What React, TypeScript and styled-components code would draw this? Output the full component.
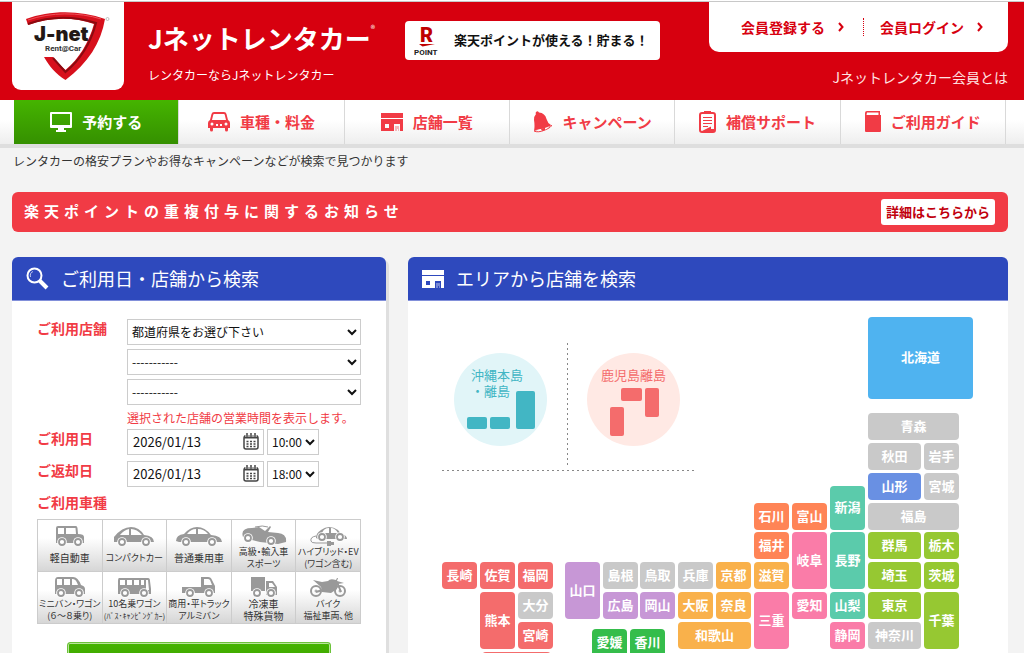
import React from 'react';
import styled, { createGlobalStyle, css } from 'styled-components';

const color = {
  brand: '#d7000f',
  accent: '#f13b45',
  blue: '#2e49bd',
  page: '#f3f3f3',
  line: '#cccccc',
};

const region = {
  none: '#c9c9c9',
  hokkaido: '#4fb3f0',
  tohoku: '#6990e3',
  kanto: '#96c832',
  koshinetsu: '#5bcbab',
  hokuriku: '#ff8456',
  tokai: '#fa7ca8',
  kinki: '#f9b14b',
  chugoku: '#c797d6',
  shikoku: '#35bd4b',
  kyushu: '#f46c6c',
};

const GlobalStyle = createGlobalStyle`
  * { box-sizing: border-box; }
  body {
    margin: 0;
    background: ${color.page};
    color: #333;
    font-family: "Noto Sans CJK JP", sans-serif;
    font-size: 12px;
    line-height: 18px;
  }
  a { color: inherit; text-decoration: none; }
  button, input, select { font: inherit; margin: 0; }
  p, h1, h2 { margin: 0; }
  svg { display: block; flex: none; }
`;

const Page = styled.div`
  height: 100vh;
  overflow: hidden;
  border-top: 1px solid #fff;
`;

/* ---------- header ---------- */

const Header = styled.header`
  display: flex;
  align-items: flex-start;
  height: 99px;
  padding: 0 16px 0 12px;
  border-top: 1px solid #c8c8c8;
  background: ${color.brand};
`;

const LogoBox = styled.a`
  width: 112px;
  height: 88px;
  border-radius: 0 0 9px 9px;
  background: #fff;
`;

const Brand = styled.div`
  width: 257px;
  padding: 17px 0 0 24px;
  color: #fff;
  white-space: nowrap;
`;

const BrandName = styled.h1`
  display: flex;
  height: 38px;
  font-size: 26px;
  line-height: 38px;
  font-weight: 700;
  sup { font-size: 9px; line-height: 20px; font-weight: 400; }
`;

const Tagline = styled.p`
  padding-top: 9px;
`;

const PointBanner = styled.a`
  display: flex;
  align-items: center;
  gap: 14px;
  width: 255px;
  height: 39px;
  margin: 19px 0 0 24px;
  padding: 0 0 2px 9px;
  border-radius: 4px;
  background: #fff;
  color: #111;
  font-size: 13px;
  font-weight: 700;
  white-space: nowrap;
`;

const Member = styled.div`
  display: flex;
  flex-direction: column;
  align-items: flex-end;
  gap: 16px;
  margin-left: auto;
`;

const MemberBox = styled.div`
  display: flex;
  align-items: center;
  width: 299px;
  height: 50px;
  border-radius: 0 0 10px 10px;
  background: #fff;
`;

const MemberLink = styled.a`
  display: flex;
  align-items: center;
  justify-content: space-between;
  width: 119px;
  margin-left: 32px;
  padding-right: 16px;
  color: ${color.brand};
  font-size: 14px;
  font-weight: 700;
  white-space: nowrap;
  & + & {
    width: 120px;
    margin-left: 3px;
    padding: 0 0 0 16px;
    border-left: 1px dotted ${color.brand};
  }
`;

const AboutLink = styled.a`
  color: #ffe3e3;
  font-size: 14px;
  line-height: 18px;
`;

/* ---------- navigation ---------- */

const Nav = styled.nav`
  display: flex;
  height: 48px;
  padding: 0 18px 0 14px;
  border-bottom: 4px solid #dedede;
  background: linear-gradient(#fff 0%, #fff 45%, #eeeeee 100%);
`;

const NavItem = styled.a<{ $active?: boolean }>`
  display: flex;
  flex: 1;
  align-items: center;
  justify-content: center;
  gap: 10px;
  padding-bottom: 1px;
  border-right: 1px solid #d9d9d9;
  color: ${color.accent};
  font-size: 15px;
  font-weight: 700;
  white-space: nowrap;
  ${(p) => p.$active && css`
    background: linear-gradient(#45b400, #359000);
    color: #fff;
  `}
`;

/* ---------- content ---------- */

const Main = styled.main`
  padding: 4px 16px 0 12px;
`;

const Intro = styled.p`
  padding-left: 1px;
`;

const Notice = styled.div`
  display: flex;
  align-items: center;
  justify-content: space-between;
  height: 40px;
  margin: 22px 0 25px;
  padding: 0 13px 0 12px;
  border-radius: 6px;
  background: ${color.accent};
  color: #fff;
`;

const NoticeText = styled.p`
  padding-bottom: 2px;
  font-size: 15px;
  font-weight: 700;
  letter-spacing: 5px;
`;

const NoticeLink = styled.a`
  padding: 4px 5px;
  border-radius: 3px;
  background: #fff;
  color: #c1000d;
  font-size: 13px;
  font-weight: 700;
`;

const Columns = styled.div`
  display: flex;
  align-items: flex-start;
  gap: 22px;
`;

const Panel = styled.section<{ $fixed?: boolean }>`
  flex: ${(p) => (p.$fixed ? '0 0 374px' : '1')};
  border-radius: 6px 6px 0 0;
  background: #fff;
  box-shadow: ${(p) => (p.$fixed ? '3px 3px 0 #dfdfdf' : 'none')};
`;

const PanelTitle = styled.h2`
  display: flex;
  align-items: center;
  gap: 12px;
  height: 44px;
  padding: 0 0 2px 14px;
  border-radius: 6px 6px 0 0;
  border-bottom: 1px solid #8290da;
  background: ${color.blue};
  color: #fff;
  font-size: 18px;
  font-weight: 400;
  svg { position: relative; top: 1px; }
`;

const Form = styled.form`
  padding: 18px 25px 40px;
`;

const Row = styled.div`
  display: grid;
  grid-template-columns: 90px 1fr;
  margin-bottom: 6px;
`;

const labelText = css`
  color: ${color.accent};
  font-size: 14px;
  font-weight: 700;
  line-height: 18px;
`;

const Label = styled.label`
  ${labelText}
`;

const GroupLabel = styled.p`
  ${labelText}
`;

const Fields = styled.div`
  display: flex;
  flex-direction: column;
  gap: 4px;
`;

const Inline = styled.div`
  display: flex;
  gap: 3px;
`;

const Select = styled.select`
  width: 100%;
  height: 26px;
  padding: 0 0 1px;
  border: 1px solid ${color.line};
  border-radius: 0;
  background-color: #fff;
  color: #111;
`;

const TimeSelect = styled(Select)`
  width: 52px;
`;

const Hint = styled.p`
  margin-bottom: -4px;
  color: ${color.accent};
`;

const DateField = styled.div`
  position: relative;
  width: 137px;
`;

const DateInput = styled.input`
  width: 100%;
  height: 26px;
  padding: 0 5px 2px;
  border: 1px solid ${color.line};
  background: #fff;
  color: #111;
  font-size: 13px;
`;

const CalendarButton = styled.button`
  position: absolute;
  top: 4px;
  right: 5px;
  padding: 0;
  border: 0;
  background: none;
`;

const CarGrid = styled.div`
  display: grid;
  grid-template-columns: repeat(5, 1fr);
  margin-top: 8px;
  border-top: 1px solid ${color.line};
  border-left: 1px solid ${color.line};
`;

const CarButton = styled.button`
  display: flex;
  flex-direction: column;
  align-items: center;
  height: 52px;
  padding: 5px 0 0;
  border: 0;
  border-right: 1px solid ${color.line};
  border-bottom: 1px solid ${color.line};
  background: linear-gradient(#fff 0%, #fff 35%, #d6d6d6 100%);
  color: #333;
`;

const CarLabel = styled.span<{ $size: number }>`
  display: flex;
  flex-direction: column;
  justify-content: center;
  height: 24px;
  font-size: ${(p) => p.$size}px;
  font-feature-settings: 'palt';
  line-height: 12px;
  white-space: nowrap;
`;

const SmallLine = styled.span`
  font-size: 8px;
`;

const Submit = styled.button`
  display: block;
  width: 264px;
  height: 48px;
  margin: 18px auto 0 30px;
  border: 1px solid #6cc23a;
  border-radius: 3px;
  background: linear-gradient(#45b400, #359000);
  box-shadow: inset 0 0 0 1px #b9e59b;
`;

/* ---------- area map ---------- */

const MapCanvas = styled.div`
  position: relative;
  height: 480px;
  overflow: hidden;
`;

const Tile = styled.a<{ $x: number; $y: number; $w: number; $h: number; $bg: string }>`
  position: absolute;
  left: ${(p) => p.$x}px;
  top: ${(p) => p.$y}px;
  width: ${(p) => p.$w}px;
  height: ${(p) => p.$h}px;
  display: flex;
  align-items: center;
  justify-content: center;
  padding-bottom: 2px;
  border-radius: 4px;
  background: ${(p) => p.$bg};
  color: #fff;
  font-size: 13px;
  font-weight: 700;
`;

const Islands = styled.a<{ $x: number; $bg: string; $fg: string }>`
  position: absolute;
  left: ${(p) => p.$x}px;
  top: 52px;
  width: 93px;
  height: 93px;
  padding: 14px 0 0 14px;
  border-radius: 50%;
  background: ${(p) => p.$bg};
  color: ${(p) => p.$fg};
  font-size: 13px;
  line-height: 16px;
  white-space: pre;
  svg { position: absolute; left: 0; top: 0; fill: currentColor; }
`;

const Dots = styled.svg`
  position: absolute;
  left: 34px;
  top: 42px;
  stroke: #888;
  stroke-width: 1;
  stroke-dasharray: 2 3;
`;

/* ---------- drawings ---------- */

const Logo = () => (
  <svg width="112" height="88" viewBox="12 2 112 88" role="img" aria-label="J-net Rent@Car">
    <path fill="#d7101c" d="M26 19C50 10 80 10 105 19C101 43 88 63 65.500 80C56 74 49 66 44 57H53C57 62 61 66 65.500 70C79 59 89 42 94 24C74 17 50 17 28 25Z" />
    <path fill="none" stroke="#8c0a10" strokeWidth="2" d="M28 24C50 16 74 16 96 23C91 42 80 60 65.500 72L53 58" />
    <path fill="none" stroke="#f0525a" strokeWidth="1" d="M28 20C51 12 79 12 101 19" />
    <text x="34" y="41" fontFamily="Inter, sans-serif" fontSize="20" fontWeight="900" fill="#231815">J-net</text>
    <text x="45" y="51" fontFamily="Roboto, sans-serif" fontSize="8" fontWeight="700" fill="#333">Rent@Car</text>
    <circle cx="107.500" cy="19" r="1.500" fill="none" stroke="#999" strokeWidth=".6" />
  </svg>
);

const PointMark = () => (
  <svg width="26" height="37" viewBox="0 -4 26 37" role="img" aria-label="R POINT">
    <text x="6" y="17" fontFamily="Roboto, sans-serif" fontSize="20" fontWeight="900" fill="#bf0000">R</text>
    <path fill="#bf0000" d="M5 19H21L8.500 21.500Z" />
    <text x="0" y="30" fontFamily="Roboto, sans-serif" fontSize="8" fontWeight="700" fill="#222">POINT</text>
  </svg>
);

const Chevron = () => (
  <svg width="6" height="10" viewBox="0 0 6 10" fill="none" stroke="currentColor" strokeWidth="2">
    <path d="M1 1L4.500 5L1 9" />
  </svg>
);

const MonitorIcon = () => (
  <svg width="22" height="20" viewBox="0 0 22 20" fill="currentColor">
    <path fillRule="evenodd" d="M1 0H21Q22 0 22 1V15Q22 16 21 16H14V18H16V20H6V18H8V16H1Q0 16 0 15V1Q0 0 1 0ZM2 2V13H20V2Z" />
  </svg>
);

const CarIcon = () => (
  <svg width="22" height="20" viewBox="0 0 22 20" fill="currentColor">
    <path fillRule="evenodd" d="M6 0H16Q18 0 18.500 2L20 8Q22 9 22 11V16H20V18Q20 19.500 18.500 19.500T17 18V16H5V18Q5 19.500 3.500 19.500T2 18V16H0V11Q0 9 2 8L3.500 2Q4 0 6 0ZM6 2Q5.500 2 5.200 3L4 8H18L16.800 3Q16.500 2 16 2ZM4 10.500A1.500 1.500 0 1 0 4 13.500A1.500 1.500 0 1 0 4 10.500ZM18 10.500A1.500 1.500 0 1 0 18 13.500A1.500 1.500 0 1 0 18 10.500ZM8 12V14H10V12ZM12 12V14H14V12Z" />
  </svg>
);

const StoreIcon = () => (
  <svg width="22" height="18" viewBox="0 0 22 18" fill="currentColor">
    <path fillRule="evenodd" d="M0 0H22V5H0ZM0 6H22V18H19V11H13V18H0ZM4 11V15H8V11Z" />
    <path d="M14 13H18V18H17V16H16V18H14Z" opacity=".35" />
  </svg>
);

const BellIcon = () => (
  <svg width="20" height="22" viewBox="0 0 20 22" fill="currentColor">
    <path d="M2.500 2Q4-1 6 1.500Q12 2 13.500 8Q14.500 12 18 14Q17 17 8 18L1 20Q2 15 1 9Q1 5 3 3Z" />
    <path d="M1 20Q5 22 12 19Q19 16 18.500 14" fill="none" stroke="currentColor" />
    <path d="M3 19Q10 18.500 17 15Q14 18 9 19.500Z" fill="#fff" />
    <path d="M8 18.500Q9 16.500 12 17V19L9 20Z" />
  </svg>
);

const ClipboardIcon = () => (
  <svg width="17" height="22" viewBox="0 0 17 22" fill="none" stroke="currentColor">
    <rect x="1" y="2" width="15" height="19" rx="2" strokeWidth="2" />
    <path d="M5 0H12V3H5Z" fill="currentColor" stroke="none" />
    <path d="M4 6.500H13M4 9.500H13M4 12.500H13M4 15.500H9" />
    <path d="M3 20L12 15.500V18H15V21H3Z" fill="currentColor" stroke="none" />
  </svg>
);

const BookIcon = () => (
  <svg width="16" height="21" viewBox="0 0 16 21" fill="currentColor">
    <path fillRule="evenodd" d="M2 0H15V4H16V20Q16 21 15 21H1Q0 21 0 20V2Q0 0 2 0ZM2 1.500L1.500 4H13.500V1.500Z" />
  </svg>
);

const SearchIcon = () => (
  <svg width="23" height="23" viewBox="0 0 23 23" fill="none" stroke="#fff">
    <circle cx="8.500" cy="8.500" r="7" strokeWidth="2" />
    <path d="M4.500 10Q3.500 6 7 4.500" strokeWidth="1" opacity=".7" />
    <path d="M13.500 13.500L21 21" strokeWidth="4" />
  </svg>
);

const CalendarIcon = () => (
  <svg width="16" height="17" viewBox="0 0 16 17" fill="none" stroke="#444">
    <rect x="1" y="3" width="14" height="13" rx="2" strokeWidth="1.500" />
    <path d="M1 4H15" strokeWidth="3" />
    <path d="M4 0V4M8 0V4M12 0V4" stroke="#fff" strokeWidth="3" />
    <path d="M4 0V4M8 0V4M12 0V4" strokeWidth="1.500" />
    <path d="M3.500 8.500H12.500M3.500 11H12.500M3.500 13.500H12.500" strokeWidth="1.500" strokeDasharray="2 1.500" />
  </svg>
);

const Wheels = ({ at, y = 17 }: { at: number[]; y?: number }) => (
  <g fill="#fff">
    {at.map((x) => (
      <g key={x}>
        <circle cx={x} cy={y} r="4.800" />
        <circle cx={x} cy={y} r="3" stroke="#999" strokeWidth="1.800" />
      </g>
    ))}
  </g>
);

const CarDrawing = ({ children }: { children: React.ReactNode }) => (
  <svg width="48" height="21" viewBox="0 0 48 21" fill="#999">{children}</svg>
);

type Car = { lines: string[]; size: number; small?: number; art: React.ReactNode };

const cars: Car[] = [
  {
    lines: ['軽自動車'], size: 10,
    art: <>
      <path fillRule="evenodd" d="M12 1H30Q31 1 31.500 3L32 9Q38 9 38 12V18H10V3Q10 1 12 1ZM12 3V9H18V3ZM20 3V9H30L29.500 3Z" />
      <Wheels at={[16, 32]} />
    </>,
  },
  {
    lines: ['コンパクトカー'], size: 9,
    art: <>
      <path fillRule="evenodd" d="M4 17V12Q12 2 21 2Q29 2 34 10Q44 11 44 17ZM10 10H19V4Q14 5 10 10ZM21 4V10H32Q27 4 21 4Z" />
      <Wheels at={[12, 36]} />
    </>,
  },
  {
    lines: ['普通乗用車'], size: 10,
    art: <>
      <path fillRule="evenodd" d="M1 16Q1 10 9 9Q15 2 22 2Q30 2 36 10Q47 11 47 17H4ZM12 9H21V4Q16 4 12 9ZM23 4V9H33Q29 4 23 4Z" />
      <Wheels at={[11, 37]} />
    </>,
  },
  {
    lines: ['高級・輸入車', 'スポーツ'], size: 9,
    art: <>
      <path d="M3 12Q0 3 12 3L19 2L25 6L30 1L31 2L28 7L38 8Q47 9 46 17L38 19L20 17L8 14Z" />
      <path d="M15 2Q23 0 28 2" fill="none" stroke="#999" />
      <Wheels at={[8]} y={13} />
      <Wheels at={[31]} y={16} />
    </>,
  },
  {
    lines: ['ハイブリッド・EV', '(ワゴン含む)'], size: 9,
    art: <>
      <path fillRule="evenodd" d="M12 13Q12 8 17 5Q25-1 34 5L37 9Q43 10 43 14H14ZM18 8H25V3Q20 3 18 8ZM27 3V8H34Q31 3 27 3Z" />
      <Wheels at={[18, 36]} y={12} />
      <path d="M12 11Q6 12 7 16Q7 18 12 18H24" fill="none" stroke="#999" />
      <path d="M23 16H27V21H23ZM27 17H30V20H27Z" />
    </>,
  },
  {
    lines: ['ミニバン・ワゴン', '(６〜８乗り)'], size: 9,
    art: <>
      <path fillRule="evenodd" d="M12 0H27Q32 0 35 8Q39 9 39 12V17H9V4Q9 0 12 0ZM11 2V8H16V2ZM18 2V8H24V2ZM26 2V8H32Q30 2 27 2Z" />
      <Wheels at={[15, 33]} y={16} />
    </>,
  },
  {
    lines: ['10名乗ワゴン', '(ﾊﾞｽ･ｷｬﾝﾋﾟﾝｸﾞｶｰ)'], size: 9, small: 1,
    art: <>
      <path fillRule="evenodd" d="M9 1H38Q40 1 40 4L41 12V17H8V4Q8 1 9 1ZM10 3V8H15V3ZM17 3V8H22V3ZM24 3V8H29V3ZM31 3V8H34V3ZM36 3V13H39L38 3Z" />
      <Wheels at={[15, 34]} y={16} />
    </>,
  },
  {
    lines: ['商用・平トラック', 'アルミバン'], size: 9,
    art: <>
      <path fillRule="evenodd" d="M7 10H26V0H33Q36 0 37 3L40 9V16H7ZM29 2V8H37L35 3Q34 2 33 2Z" />
      <Wheels at={[15, 34]} y={16} />
    </>,
  },
  {
    lines: ['冷凍車', '特殊貨物'], size: 10,
    art: <>
      <path fillRule="evenodd" d="M11 0H25V14H11ZM26 4H33L37 10V18H26ZM29 6V10H35L32 6Z" />
      <Wheels at={[17, 31]} y={16} />
    </>,
  },
  {
    lines: ['バイク', '福祉車両、他'], size: 9,
    art: <>
      <path d="M9 3L18 5L24 4Q26 1 32 3L33 1L34 1L33 4L40 6L34 7L33 12L27 16L18 15L17 10Z" />
      <path d="M33 5L37 15M12 15L22 12" stroke="#999" strokeWidth="2" />
      <g fill="none" stroke="#999">
        <circle cx="12" cy="14" r="5" strokeWidth="2" />
        <circle cx="36" cy="14" r="5" strokeWidth="2" />
        <circle cx="12" cy="14" r="1" />
        <circle cx="36" cy="14" r="1" />
      </g>
    </>,
  },
];

const navItems = [
  { label: '予約する', icon: <MonitorIcon />, active: true },
  { label: '車種・料金', icon: <CarIcon /> },
  { label: '店舗一覧', icon: <StoreIcon /> },
  { label: 'キャンペーン', icon: <BellIcon /> },
  { label: '補償サポート', icon: <ClipboardIcon /> },
  { label: 'ご利用ガイド', icon: <BookIcon /> },
];

type Prefecture = [name: string, x: number, y: number, w: number, h: number, area: keyof typeof region];

const prefectures: Prefecture[] = [
  ['北海道', 460, 16, 105, 82, 'hokkaido'],
  ['青森', 460, 112, 91, 27, 'none'],
  ['秋田', 460, 142, 53, 27, 'none'],
  ['岩手', 516, 142, 35, 27, 'none'],
  ['山形', 460, 172, 53, 27, 'tohoku'],
  ['宮城', 516, 172, 35, 27, 'none'],
  ['福島', 460, 202, 91, 27, 'none'],
  ['群馬', 460, 231, 53, 27, 'kanto'],
  ['栃木', 516, 231, 35, 27, 'kanto'],
  ['埼玉', 460, 261, 53, 27, 'kanto'],
  ['茨城', 516, 261, 35, 27, 'kanto'],
  ['東京', 460, 291, 53, 27, 'kanto'],
  ['千葉', 516, 291, 35, 57, 'kanto'],
  ['神奈川', 460, 321, 53, 27, 'none'],
  ['新潟', 422, 185, 35, 44, 'koshinetsu'],
  ['長野', 422, 231, 35, 57, 'koshinetsu'],
  ['山梨', 422, 291, 35, 27, 'koshinetsu'],
  ['静岡', 422, 321, 35, 27, 'tokai'],
  ['富山', 384, 202, 35, 27, 'hokuriku'],
  ['岐阜', 384, 231, 35, 57, 'tokai'],
  ['愛知', 384, 291, 35, 27, 'tokai'],
  ['石川', 346, 202, 35, 27, 'hokuriku'],
  ['福井', 346, 231, 35, 27, 'hokuriku'],
  ['滋賀', 346, 261, 35, 27, 'kinki'],
  ['三重', 346, 291, 35, 57, 'tokai'],
  ['京都', 308, 261, 35, 27, 'kinki'],
  ['奈良', 308, 291, 35, 27, 'kinki'],
  ['兵庫', 270, 261, 35, 27, 'none'],
  ['大阪', 270, 291, 35, 27, 'kinki'],
  ['和歌山', 270, 321, 73, 27, 'kinki'],
  ['鳥取', 232, 261, 35, 27, 'none'],
  ['岡山', 232, 291, 35, 27, 'chugoku'],
  ['島根', 195, 261, 35, 27, 'none'],
  ['広島', 195, 291, 35, 27, 'chugoku'],
  ['山口', 157, 261, 35, 57, 'chugoku'],
  ['愛媛', 184, 328, 35, 27, 'shikoku'],
  ['香川', 222, 328, 35, 27, 'shikoku'],
  ['福岡', 110, 261, 35, 27, 'kyushu'],
  ['大分', 110, 291, 35, 27, 'none'],
  ['宮崎', 110, 321, 35, 27, 'kyushu'],
  ['佐賀', 72, 261, 35, 27, 'kyushu'],
  ['熊本', 72, 291, 35, 57, 'kyushu'],
  ['長崎', 34, 261, 35, 27, 'kyushu'],
  ['鹿児島', 74, 351, 69, 57, 'kyushu'],
];

const DateRow = ({ id, label, time }: { id: string; label: string; time: string }) => (
  <Row>
    <Label htmlFor={id}>{label}</Label>
    <Inline>
      <DateField>
        <DateInput id={id} type="text" defaultValue="2026/01/13" />
        <CalendarButton type="button" aria-label="カレンダー"><CalendarIcon /></CalendarButton>
      </DateField>
      <TimeSelect aria-label={`${label} 時刻`} defaultValue={time}>
        <option>{time}</option>
      </TimeSelect>
    </Inline>
  </Row>
);

export default function App() {
  return (
    <Page>
      <GlobalStyle />
      <Header>
        <LogoBox href="#"><Logo /></LogoBox>
        <Brand>
          <BrandName>Jネットレンタカー<sup>®</sup></BrandName>
          <Tagline>レンタカーならJネットレンタカー</Tagline>
        </Brand>
        <PointBanner href="#"><PointMark />楽天ポイントが使える！貯まる！</PointBanner>
        <Member>
          <MemberBox>
            <MemberLink href="#">会員登録する<Chevron /></MemberLink>
            <MemberLink href="#">会員ログイン<Chevron /></MemberLink>
          </MemberBox>
          <AboutLink href="#">Jネットレンタカー会員とは</AboutLink>
        </Member>
      </Header>

      <Nav>
        {navItems.map((item) => (
          <NavItem key={item.label} href="#" $active={item.active}>{item.icon}{item.label}</NavItem>
        ))}
      </Nav>

      <Main>
        <Intro>レンタカーの格安プランやお得なキャンペーンなどが検索で見つかります</Intro>
        <Notice>
          <NoticeText>楽天ポイントの重複付与に関するお知らせ</NoticeText>
          <NoticeLink href="#">詳細はこちらから</NoticeLink>
        </Notice>

        <Columns>
          <Panel $fixed>
            <PanelTitle><SearchIcon />ご利用日・店舗から検索</PanelTitle>
            <Form>
              <Row>
                <Label htmlFor="shop">ご利用店舗</Label>
                <Fields>
                  <Select id="shop"><option>都道府県をお選び下さい</option></Select>
                  <Select aria-label="エリア"><option>-----------</option></Select>
                  <Select aria-label="店舗"><option>-----------</option></Select>
                  <Hint>選択された店舗の営業時間を表示します。</Hint>
                </Fields>
              </Row>
              <DateRow id="start" label="ご利用日" time="10:00" />
              <DateRow id="end" label="ご返却日" time="18:00" />
              <GroupLabel id="car-type">ご利用車種</GroupLabel>
              <CarGrid role="group" aria-labelledby="car-type">
                {cars.map((car) => (
                  <CarButton key={car.lines[0]} type="button">
                    <CarDrawing>{car.art}</CarDrawing>
                    <CarLabel $size={car.size}>
                      {car.lines.map((line, i) =>
                        i === car.small ? <SmallLine key={line}>{line}</SmallLine> : <span key={line}>{line}</span>,
                      )}
                    </CarLabel>
                  </CarButton>
                ))}
              </CarGrid>
              <Submit type="submit" aria-label="検索" />
            </Form>
          </Panel>

          <Panel>
            <PanelTitle><StoreIcon />エリアから店舗を検索</PanelTitle>
            <MapCanvas>
              <Dots width="252" height="130">
                <path d="M125.500 0V125M0 127.500H252" />
              </Dots>
              <Islands href="#" $x={46} $bg="#e1f5f8" $fg="#42b6c4">
                {' 沖縄本島\n ・離島'}
                <svg width="93" height="93">
                  <rect x="13" y="64" width="20" height="12" rx="2" />
                  <rect x="36" y="64" width="20" height="12" rx="2" />
                  <rect x="62" y="38" width="19" height="38" rx="2" />
                </svg>
              </Islands>
              <Islands href="#" $x={179} $bg="#ffe9e4" $fg="#f46c6c">
                鹿児島離島
                <svg width="93" height="93">
                  <rect x="34" y="35" width="21" height="13" rx="2" />
                  <rect x="58" y="35" width="14" height="29" rx="2" />
                  <rect x="23" y="54" width="14" height="29" rx="2" />
                </svg>
              </Islands>
              {prefectures.map(([name, x, y, w, h, area]) => (
                <Tile key={name} href="#" $x={x} $y={y} $w={w} $h={h} $bg={region[area]}>{name}</Tile>
              ))}
            </MapCanvas>
          </Panel>
        </Columns>
      </Main>
    </Page>
  );
}
